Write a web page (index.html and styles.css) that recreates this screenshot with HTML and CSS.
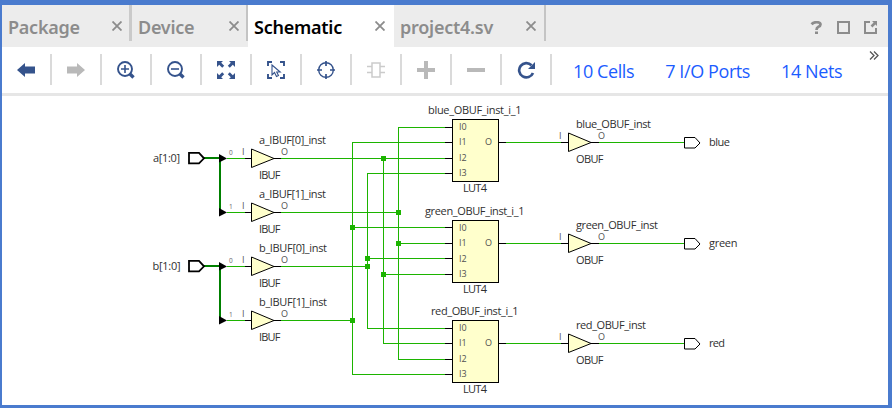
FILE: index.html
```html
<!DOCTYPE html>
<html lang="en">
<head>
<meta charset="utf-8">
<title>Schematic</title>
<link rel="stylesheet" href="styles.css">
</head>
<body>
<div class="window">
  <div class="tabs">
    <div class="tab package"><span>Package</span><svg class="close" viewBox="0 0 10 10"><path d="M.5 .5l9 9M9.500 .5l-9 9"/></svg></div>
    <div class="tab device"><span>Device</span><svg class="close" viewBox="0 0 10 10"><path d="M.5 .5l9 9M9.500 .5l-9 9"/></svg></div>
    <div class="tab active"><span>Schematic</span><svg class="close" viewBox="0 0 10 10"><path d="M.5 .5l9 9M9.500 .5l-9 9"/></svg></div>
    <div class="tab source"><span>project4.sv</span><svg class="close" viewBox="0 0 10 10"><path d="M.5 .5l9 9M9.500 .5l-9 9"/></svg></div>
    <div class="window-actions">
      <svg viewBox="0 0 13 13"><path d="M1.500 3.200Q3.500 1.200 6.500 1.200Q10.500 1.200 10.500 3.600Q10.500 5 8.500 5.800Q6.500 6.800 6.500 9" stroke-width="2.700"/><path d="M5 10.500h3V13H5z" class="solid"/></svg>
      <svg viewBox="0 0 13 13"><path d="M1 1h11v11H1z" stroke-width="2"/></svg>
      <svg viewBox="0 0 13 13"><path d="M6 1H1v11h11V7" stroke-width="2"/><path d="M8 0h5v5l-1.600-1.600-3 3-1.800-1.800 3-3z" class="solid"/></svg>
    </div>
  </div>
  <div class="toolbar">
    <div class="tool"><svg viewBox="0 0 18 18"><path class="solid" d="M0 9L8 2v3.500h10v7H8V16z"/></svg></div>
    <div class="tool off"><svg viewBox="0 0 18 18"><path class="solid" d="M18 9L10 2v3.500H0v7h10V16z"/></svg></div>
    <div class="tool"><svg viewBox="0 0 18 18"><circle cx="8" cy="8" r="7" stroke-width="1.900"/><path d="M4 8h8M8 4v8" stroke-width="1.600"/><path d="M12.500 12.500l4 4" stroke-width="3.400"/></svg></div>
    <div class="tool"><svg viewBox="0 0 18 18"><circle cx="8" cy="8" r="7" stroke-width="1.900"/><path d="M4 8h8" stroke-width="1.600"/><path d="M12.500 12.500l4 4" stroke-width="3.400"/></svg></div>
    <div class="tool"><svg viewBox="0 0 18 18"><path class="solid" d="M0 0h6L4.200 1.800 7.200 4.800 5.200 6.800 2.200 3.800 0 6zM18 0h-6l1.800 1.800-3 3 2 2 3-3L18 6zM0 18h6l-1.800-1.800 3-3-2-2-3 3L0 12zM18 18h-6l1.800-1.800-3-3 2-2 3 3L18 12z"/></svg></div>
    <div class="tool"><svg viewBox="0 0 18 18"><path stroke-width="1.900" d="M1 5V1h4M13 1h4v4M17 13v4h-4M5 17H1v-4"/><path d="M5 4v10l2.500-2.500 2 4 2-1-1.800-3.500h3.500z" stroke-width="1.100"/></svg></div>
    <div class="tool"><svg viewBox="0 0 18 18"><circle cx="9" cy="9" r="7.300" stroke-width="1.400"/><path stroke-width="1.700" d="M9 0v5M9 13v5M0 9h5M13 9h5"/></svg></div>
    <div class="tool pale"><svg viewBox="0 0 18 18"><path stroke-width="1.500" d="M5 2h8v14H5zM0 5.500h5M0 11.500h5M13 5.500h5M13 11.500h5"/></svg></div>
    <div class="tool off"><svg viewBox="0 0 18 18"><path stroke-width="4" d="M9 0v18M0 9h18"/></svg></div>
    <div class="tool off"><svg viewBox="0 0 18 18"><path stroke-width="4" d="M0 9h18"/></svg></div>
    <div class="tool"><svg viewBox="0 0 18 18"><path stroke-width="2.700" d="M14.500 4.200A7.200 7.200 0 1 0 16 12"/><path class="solid" d="M18 1v7h-7z"/></svg></div>
    <div class="links"><a>10 Cells</a><a>7 I/O Ports</a><a>14 Nets</a></div>
    <svg class="more" viewBox="0 0 10 9"><path d="M1 .5l4 4-4 4M5 .5l4 4-4 4"/></svg>
  </div>
  <svg class="schematic" viewBox="2 96 886 309">
    <defs>
      <path id="buf" d="M.5 -9.500V9L23 0z"/>
      <path id="inport" d="M1 -5.500h10L16 0l-5 5H1z"/>
      <path id="outport" d="M.5 -5.500H11L16 0L11 5H.5z"/>
    </defs>

    <g class="bus">
      <path d="M204 158H220V212M204 266H220V320"/>
    </g>
    <g class="net">
      <path d="M227 158.500H245M227 212.500H245M227 266.500H245M227 320.500H245"/>
      <path d="M281 158.500H445M281 212.500H398.500M281 266.500H367.500M281 320.500H352.500"/>
      <path d="M445 127.500H398.500V359.500H445M445 142.500H352.500V374.500H445M445 173.500H367.500V328.500H445M383.500 158.500V343.500H445"/>
      <path d="M352.500 227.500H445M398.500 243.500H445M367.500 258.500H445M383.500 274.500H445"/>
      <path d="M506 142.500H561M599 142.500H684M506 243.500H561M599 243.500H684M506 343.500H561M599 343.500H684"/>
    </g>
    <path class="junction" d="M381 156h5v5h-5zM396 210h5v5h-5zM350 225h5v5h-5zM396 241h5v5h-5zM365 256h5v5h-5zM365 264h5v5h-5zM381 272h5v5h-5zM350 318h5v5h-5z"/>
    <g class="pin">
      <path d="M245 158.500h6M274 158.500h7M245 212.500h6M274 212.500h7M245 266.500h6M274 266.500h7M245 320.500h6M274 320.500h7"/>
      <path d="M445 127.500h7M445 142.500h7M445 158.500h7M445 173.500h7M499 142.500h7"/>
      <path d="M445 227.500h7M445 243.500h7M445 258.500h7M445 274.500h7M499 243.500h7"/>
      <path d="M445 328.500h7M445 343.500h7M445 359.500h7M445 374.500h7M499 343.500h7"/>
      <path d="M561 142.500h7M591 142.500h8M561 243.500h7M591 243.500h8M561 343.500h7M591 343.500h8"/>
    </g>
    <path class="arrow" d="M219 154l8 4.500-8 4zM219 208l8 4.500-8 4zM219 262l8 4.500-8 4zM219 316l8 4.500-8 4z"/>

    <g class="inports"><use href="#inport" x="188" y="158.300"/><use href="#inport" x="188" y="266.300"/></g>
    <g class="cell">
      <use href="#buf" x="251" y="158.500"/><use href="#buf" x="251" y="212.500"/><use href="#buf" x="251" y="266.500"/><use href="#buf" x="251" y="320.500"/>
      <use href="#buf" x="568" y="142.500"/><use href="#buf" x="568" y="243.500"/><use href="#buf" x="568" y="343.500"/>
      <rect x="452.500" y="119.500" width="46" height="62"/><rect x="452.500" y="220.500" width="46" height="62"/><rect x="452.500" y="320.500" width="46" height="62"/>
    </g>
    <g class="outports"><use href="#outport" x="684" y="143"/><use href="#outport" x="684" y="244"/><use href="#outport" x="684" y="344"/></g>

    <g class="label">
      <text x="153" y="162" textLength="27">a[1:0]</text>
      <text x="152.500" y="270" textLength="28">b[1:0]</text>
      <text x="259" y="144" textLength="67">a_IBUF[0]_inst</text><text x="259" y="179" textLength="21.500">IBUF</text>
      <text x="259" y="198" textLength="67">a_IBUF[1]_inst</text><text x="259" y="233" textLength="21.500">IBUF</text>
      <text x="259" y="252" textLength="68">b_IBUF[0]_inst</text><text x="259" y="287" textLength="21.500">IBUF</text>
      <text x="259" y="306" textLength="68">b_IBUF[1]_inst</text><text x="259" y="341" textLength="21.500">IBUF</text>
      <text x="428" y="114" textLength="93.500">blue_OBUF_inst_i_1</text><text x="463" y="192" textLength="24">LUT4</text>
      <text x="425" y="215" textLength="99.500">green_OBUF_inst_i_1</text><text x="463" y="293" textLength="24">LUT4</text>
      <text x="431" y="315" textLength="87.500">red_OBUF_inst_i_1</text><text x="463" y="393" textLength="24">LUT4</text>
      <text x="576" y="128" textLength="75">blue_OBUF_inst</text><text x="576" y="163" textLength="27.500">OBUF</text>
      <text x="576" y="229" textLength="82">green_OBUF_inst</text><text x="576" y="264" textLength="27.500">OBUF</text>
      <text x="576" y="329" textLength="70">red_OBUF_inst</text><text x="576" y="364" textLength="27.500">OBUF</text>
      <text x="709" y="146" textLength="21">blue</text><text x="709" y="247" textLength="28.500">green</text><text x="709" y="347" textLength="16">red</text>
    </g>
    <g class="pin-label">
      <text x="242" y="155">I</text><text x="281" y="155">O</text><text x="242" y="209">I</text><text x="281" y="209">O</text>
      <text x="242" y="263">I</text><text x="281" y="263">O</text><text x="242" y="317">I</text><text x="281" y="317">O</text>
      <text x="559" y="139">I</text><text x="598" y="139">O</text><text x="559" y="240">I</text><text x="598" y="240">O</text><text x="559" y="340">I</text><text x="598" y="340">O</text>
      <text x="459" y="130">I0</text><text x="459" y="145">I1</text><text x="459" y="161">I2</text><text x="459" y="176">I3</text><text x="485" y="145">O</text>
      <text x="459" y="231">I0</text><text x="459" y="246">I1</text><text x="459" y="262">I2</text><text x="459" y="277">I3</text><text x="485" y="246">O</text>
      <text x="459" y="331">I0</text><text x="459" y="346">I1</text><text x="459" y="362">I2</text><text x="459" y="377">I3</text><text x="485" y="346">O</text>
    </g>
    <g class="bit">
      <text x="229" y="155">0</text><text x="229" y="209">1</text><text x="229" y="263">0</text><text x="229" y="317">1</text>
    </g>
  </svg>
</div>
</body>
</html>
```
FILE: styles.css
```css
* { box-sizing: border-box; }
body {
  margin: 0;
  background: #fff;
  font-family: "Open Sans", "Noto Sans", sans-serif;
  overflow: hidden;
}
svg { display: block; fill: none; }
.window {
  width: 892px;
  height: 408px;
  border: solid #4a7bce;
  border-width: 5px 4px 3px 2px;
  display: flex;
  flex-direction: column;
}
.tabs {
  display: flex;
  height: 42px;
  flex: none;
  background: #ececec;
}
.tab {
  display: flex;
  justify-content: space-between;
  align-items: center;
  height: 36px;
  padding: 8px 6px 0 6px;
  font-family: "Noto Sans", "Open Sans", sans-serif;
  font-size: 18px;
  line-height: 28px;
  font-weight: 600;
  color: #8c8c8c;
  border-right: 2px solid #c4c4c4;
  white-space: nowrap;
}
.package { width: 130px; padding-right: 7px; border-right-width: 3px; border-right-color: #cacaca; }
.device { width: 116px; padding-right: 7px; }
.active {
  width: 146px;
  height: 42px;
  padding: 2px 9px 0 6px;
  background: #fff;
  color: #000;
  border-right: 0;
}
.source { width: 152px; padding-right: 8px; }
.tab span { letter-spacing: -0.25px; }
.close { width: 10px; height: 10px; stroke: #8c8c8c; stroke-width: 1.8; margin-bottom: 2px; }
.window-actions {
  display: flex;
  gap: 14px;
  margin-left: auto;
  padding: 16px 11px 0 0;
}
.window-actions svg { width: 13px; height: 13px; stroke: #8c8c8c; }
.window-actions .solid { fill: #8c8c8c; stroke: none; }
.toolbar {
  display: flex;
  flex: none;
  height: 49px;
  padding-top: 7px;
  border-bottom: 3px solid #e6e6e6;
}
.tool {
  width: 50px;
  height: 31px;
  border-right: 2px solid #dadada;
  padding: 7px 0 0 15px;
  color: #35538c;
}
.tool svg { width: 18px; height: 18px; stroke: currentColor; }
.tool .solid { fill: currentColor; stroke: none; }
.off { color: #b9b9b9; }
.pale { color: #cbcbcb; }
.links {
  display: flex;
  gap: 31px;
  padding-left: 21px;
  font-size: 18px;
  letter-spacing: -0.4px;
  line-height: 35px;
  color: #1b5cff;
  white-space: nowrap;
}
.more { width: 10px; height: 9px; margin: -3px 9px 0 auto; stroke: #555; stroke-width: 1.3; }
.schematic { width: 886px; height: 309px; flex: none; }
.bus { stroke: #008000; stroke-width: 2; }
.net { stroke: #1cb400; stroke-width: 1; shape-rendering: crispEdges; }
.junction { fill: #1cb400; }
.pin { stroke: #000; shape-rendering: crispEdges; }
.arrow { fill: #000; }
.inports { fill: #fff; stroke: #000; stroke-width: 1.8; }
.outports { fill: #fff; stroke: #000; stroke-width: 1; }
.cell { fill: #ffc; stroke: #000; stroke-width: 1; }
.label { fill: #303030; font-size: 11px; }
.pin-label { fill: #505050; font-size: 9px; }
.bit { fill: #666; font-size: 6.5px; }
```
